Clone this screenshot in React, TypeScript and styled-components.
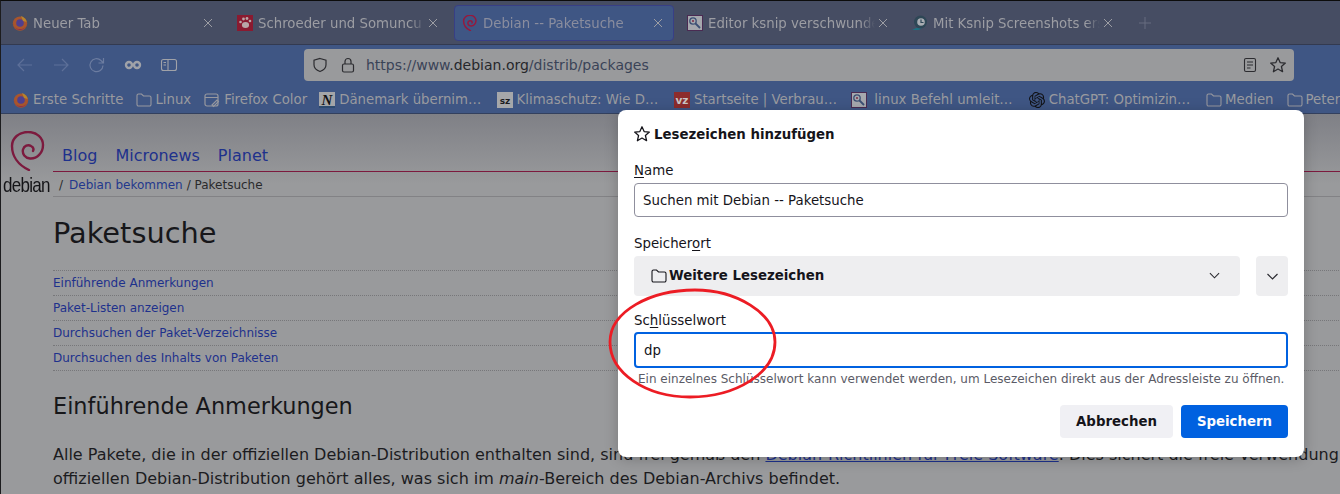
import React from 'react';
import styled, { createGlobalStyle } from 'styled-components';
import { SiOpenai } from 'react-icons/si';

const GlobalStyle = createGlobalStyle`
  html, body {
    margin: 0;
    padding: 0;
    width: 1340px;
    height: 494px;
    overflow: hidden;
    background: #999a9c;
    font-family: "DejaVu Sans", sans-serif;
  }
  * { box-sizing: border-box; }
`;

const Screen = styled.div`
  position: relative;
  width: 1340px;
  height: 494px;
  overflow: hidden;
  border-top: 1px solid #0c0c0c;
  border-left: 1px solid #1c1c1e;
`;

const TabBar = styled.div`
  display: flex;
  align-items: flex-start;
  gap: 5px;
  height: 44px;
  padding: 4px 0 0 3px;
  background: #464d63;
  border-bottom: 1px solid #333a50;
`;

const Tab = styled.div<{ $active?: boolean }>`
  display: flex;
  align-items: center;
  width: 220px;
  height: 36px;
  padding: 0 10px 0 7px;
  border-radius: 4px;
  font-size: 13.3px;
  white-space: nowrap;
  background: ${(p) => (p.$active ? '#3f5684' : 'transparent')};
  border: 1px solid ${(p) => (p.$active ? '#383f86' : 'transparent')};
  color: ${(p) => (p.$active ? '#8a8d9e' : '#9c9da3')};
`;

const TabIcon = styled.span`
  display: flex;
  flex: none;
  width: 16px;
  height: 16px;
  margin-right: 5px;
`;

const TabTitle = styled.span`
  flex: 1;
  margin-right: 3px;
  overflow: hidden;
  -webkit-mask-image: linear-gradient(to left, transparent 0, black 14px);
  mask-image: linear-gradient(to left, transparent 0, black 14px);
`;

const TabPlus = styled.div`
  display: flex;
  align-items: center;
  height: 36px;
  margin-left: 10px;
`;

const NavBar = styled.div`
  display: flex;
  align-items: center;
  height: 36px;
  padding: 4px 46px 0 15px;
  background: #3f5684;
`;

const NavButton = styled.span`
  display: flex;
  width: 18px;
  height: 18px;
  margin-right: 18px;
  flex: none;
`;

const UrlBar = styled.div`
  display: flex;
  align-items: center;
  flex: 1;
  height: 32px;
  margin-left: 108px;
  padding: 0 8px;
  background: #999a9c;
  border-radius: 4px;
  font-size: 14px;
  color: #3a4357;
`;

const UrlDomain = styled.span`
  color: #26272b;
`;

const UrlText = styled.span`
  flex: 1;
  margin-left: 10px;
`;

const UrlStar = styled.span`
  display: flex;
  margin-left: 12px;
`;

const BookmarkBar = styled.div`
  display: flex;
  align-items: center;
  height: 33px;
  padding: 5px 0 0 12px;
  background: #3f5684;
  border-bottom: 1px solid #33405e;
  font-size: 13.3px;
  color: #999a9f;
  white-space: nowrap;
  overflow: hidden;
`;

const Bookmark = styled.div<{ $folder?: boolean; $fixed?: boolean; $tight?: boolean }>`
  display: flex;
  align-items: center;
  flex: none;
  gap: ${(p) => (p.$folder ? 3 : 4)}px;
  margin-right: ${(p) => (p.$tight ? 12 : 13)}px;
  width: ${(p) => (p.$fixed ? '164.4px' : 'auto')};
`;

const LensLabel = styled.span`
  margin-left: 3px;
`;

const Page = styled.div`
  position: relative;
  height: 380px;
  background: linear-gradient(#7f8086 0, #999a9c 70px);
  color: #17171a;
`;

const LogoColumn = styled.div`
  position: absolute;
  left: 2px;
  top: 17px;
  width: 50px;
  font-family: "Liberation Sans", sans-serif;
  color: #141417;
`;

const LogoSwirl = styled.svg`
  display: block;
  margin-left: 6px;
`;

const LogoWord = styled.div`
  margin-top: 6px;
  font-size: 17px;
  line-height: 18px;
  letter-spacing: -0.7px;
  transform: scaleY(1.15);
`;

const SiteHeader = styled.div`
  padding: 31px 0 0 52px;
`;

const TopNav = styled.nav`
  display: flex;
  gap: 18px;
  padding: 0 0 4px 9px;
  font-size: 16px;
  line-height: 22px;
  color: #1e318c;
`;

const Breadcrumb = styled.div`
  height: 26px;
  padding-left: 6px;
  border-top: 1px solid #7c1a3e;
  border-bottom: 1px solid #828285;
  font-size: 12px;
  line-height: 26px;
  color: #2a2a2c;
`;

const CrumbLink = styled.a`
  color: #23388c;
  margin: 0 4px 0 6px;
`;

const Content = styled.main`
  padding: 0 0 0 52px;
  width: 1340px;
`;

const PageTitle = styled.h1`
  margin: 17px 0 18px 0;
  font-size: 28.8px;
  line-height: 38px;
  font-weight: 400;
`;

const TocItem = styled.div`
  height: 25px;
  border-top: 1px dotted #77777a;
  font-size: 12px;
  line-height: 25px;
  color: #1e318c;

  &:last-of-type {
    height: 26px;
    border-bottom: 1px dotted #77777a;
  }
`;

const SectionTitle = styled.h2`
  margin: 20px 0 22px 0;
  font-size: 22.4px;
  line-height: 30px;
  font-weight: 400;
`;

const Paragraph = styled.p`
  margin: 0;
  font-size: 16px;
  line-height: 24px;
  white-space: nowrap;
  color: #1c1c1f;
`;

const DocLink = styled.a`
  color: #1e318c;
  text-decoration: underline;
`;

const Dialog = styled.div`
  position: absolute;
  left: 617px;
  top: 109px;
  width: 686px;
  height: 347px;
  padding: 0 16px;
  background: #fff;
  border-radius: 8px;
  box-shadow: 0 2px 14px rgba(0, 0, 0, 0.22);
  color: #15141a;
  font-size: 13.33px;
`;

const DialogTitle = styled.div`
  display: flex;
  align-items: center;
  gap: 4px;
  height: 48px;
  font-weight: 700;
`;

const FieldLabel = styled.label`
  display: block;
  line-height: 16px;
  margin-bottom: 4px;

  u {
    text-underline-offset: 2px;
  }
`;

const TextField = styled.div<{ $focused?: boolean }>`
  display: flex;
  align-items: center;
  height: ${(p) => (p.$focused ? 36 : 34)}px;
  padding: 0 8px;
  border-radius: 4px;
  background: #fff;
  border: ${(p) => (p.$focused ? '2px solid #0061e0' : '1px solid #8f8f9d')};
`;

const NameGroup = styled.div`
  margin-top: 5px;
`;

const LocationGroup = styled.div`
  margin-top: 19px;
`;

const KeywordGroup = styled.div`
  margin-top: 17px;

  label {
    margin-bottom: 3px;
  }
`;

const LocationRow = styled.div`
  display: flex;
  gap: 16px;
`;

const SelectBox = styled.div`
  display: flex;
  align-items: center;
  flex: 1;
  height: 40px;
  padding: 0 20px 1px 17px;
  background: #eeeef0;
  border-radius: 4px;
  font-weight: 700;
`;

const SelectLabel = styled.span`
  flex: 1;
  margin-left: 2px;
`;

const ExpandButton = styled.div`
  display: flex;
  align-items: center;
  justify-content: center;
  width: 32px;
  height: 40px;
  background: #eeeef0;
  border-radius: 4px;
`;

const HelpText = styled.div`
  margin: 4px 0 0 4px;
  font-size: 12px;
  line-height: 14px;
  color: #5b5b66;
  white-space: nowrap;
`;

const DialogActions = styled.div`
  display: flex;
  justify-content: flex-end;
  gap: 8px;
  margin-top: 19px;
`;

const ActionButton = styled.div<{ $primary?: boolean }>`
  display: flex;
  align-items: center;
  justify-content: center;
  width: ${(p) => (p.$primary ? 107 : 113)}px;
  height: 33px;
  border-radius: 4px;
  font-weight: 700;
  background: ${(p) => (p.$primary ? '#0061e0' : '#f0f0f4')};
  color: ${(p) => (p.$primary ? '#fbfbfe' : '#15141a')};
`;

const RedCircle = styled.svg`
  position: absolute;
  left: 600px;
  top: 280px;
  pointer-events: none;
`;

const FaviconText = styled.text<{ $serif?: boolean }>`
  font-family: ${(p) => (p.$serif ? '"Liberation Serif", serif' : '"DejaVu Sans", sans-serif')};
  font-weight: 700;
  font-style: ${(p) => (p.$serif ? 'italic' : 'normal')};
`;

const CloseIcon = () => (
  <svg width="10" height="10" viewBox="0 0 10 10" style={{ flex: 'none' }}>
    <path d="M1 1l8 8M9 1l-8 8" stroke="#9c9da3" strokeWidth="1" />
  </svg>
);

const FirefoxIcon = () => (
  <svg width="16" height="16" viewBox="0 0 16 16">
    <circle cx="8" cy="8.6" r="7.2" fill="#a8552c" />
    <path d="M1 8a7 7 0 0 0 14 0c0 4-3 6-7 6S1 12 1 8z" fill="#8f2d4c" />
    <circle cx="8" cy="8" r="3.8" fill="#4f3f8e" />
    <path d="M9 1c3 1 5.5 3.5 5.5 6L11 6z" fill="#b5852e" />
  </svg>
);

const swirlPath =
  'M20 39C9 34 3 25 3 15C3 7 10 1 19 1C28 1 34 7 34 14C34 22 28 28 21 27.5C16 27 13 23 14 18.5C15 15 19 13 22 15C24 16 25 18 24 20';

const DebianFavicon = () => (
  <svg width="16" height="16" viewBox="0 0 38 40" fill="none">
    <path d={swirlPath} stroke="#97183c" strokeWidth="3.6" strokeLinecap="round" />
  </svg>
);

const LensFavicon = () => (
  <svg width="16" height="16" viewBox="0 0 16 16">
    <rect x="0.5" y="0.5" width="15" height="15" fill="#a6a8ae" stroke="#4a2b52" />
    <circle cx="6" cy="6" r="3.2" fill="none" stroke="#3c4f74" strokeWidth="1.3" />
    <circle cx="6" cy="6" r="1" fill="#7a2b44" />
    <path d="M8.5 8.5l4.5 4.5" stroke="#3c4f74" strokeWidth="1.8" />
  </svg>
);

const PawFavicon = () => (
  <svg width="16" height="16" viewBox="0 0 16 16">
    <rect width="16" height="16" fill="#8a1a30" />
    <ellipse cx="8.5" cy="10" rx="3.6" ry="3" fill="#b9a6a8" />
    <circle cx="3.5" cy="7" r="1.3" fill="#b9a6a8" />
    <circle cx="6.5" cy="4" r="1.4" fill="#b9a6a8" />
    <circle cx="10" cy="3.5" r="1.4" fill="#b9a6a8" />
    <circle cx="13" cy="6" r="1.3" fill="#b9a6a8" />
  </svg>
);

const GlobeFavicon = () => (
  <svg width="16" height="16" viewBox="0 0 16 16">
    <path d="M0 15l4-2h6l-3 2z" fill="#1f6f80" />
    <circle cx="8.5" cy="7" r="6.5" fill="#2e4756" />
    <circle cx="9" cy="7" r="3.8" fill="#a9adb3" />
    <path d="M9 4.5V7.5H11.5" stroke="#2e4756" strokeWidth="1.2" fill="none" />
  </svg>
);

const FolderIcon = ({ color = '#97989f' }: { color?: string }) => (
  <svg width="16" height="16" viewBox="0 0 16 16" fill="none" style={{ flex: 'none' }}>
    <path
      d="M1 12.5V3.5A1.5 1.5 0 0 1 2.5 2h3l2 2h6A1.5 1.5 0 0 1 15 5.5v7a1.5 1.5 0 0 1-1.5 1.5h-11A1.5 1.5 0 0 1 1 12.5z"
      stroke={color}
      strokeWidth="1.1"
    />
  </svg>
);

const StarIcon = ({ color }: { color: string }) => (
  <svg width="16" height="16" viewBox="0.5 0.5 15 15" fill="none" style={{ flex: 'none' }}>
    <path
      d="M8 1.2l2 4.5 4.9.5-3.7 3.2 1.1 4.9L8 11.8l-4.3 2.5 1.1-4.9L1.1 6.2 6 5.7z"
      stroke={color}
      strokeWidth="1.2"
      strokeLinejoin="round"
    />
  </svg>
);

const Chevron = ({ width = 11 }: { width?: number }) => (
  <svg width={width} height="7" viewBox="0 0 12 7" fill="none">
    <path d="M1 1l5 5 5-5" stroke="#2a2a30" strokeWidth="1.2" />
  </svg>
);

const tabs = [
  { title: 'Neuer Tab', icon: <FirefoxIcon /> },
  { title: 'Schroeder und Somuncu', icon: <PawFavicon /> },
  { title: 'Debian -- Paketsuche', icon: <DebianFavicon />, active: true },
  { title: 'Editor ksnip verschwunden', icon: <LensFavicon /> },
  { title: 'Mit Ksnip Screenshots erstellen', icon: <GlobeFavicon /> },
];

const tocItems = [
  'Einführende Anmerkungen',
  'Paket-Listen anzeigen',
  'Durchsuchen der Paket-Verzeichnisse',
  'Durchsuchen des Inhalts von Paketen',
];

const App: React.FC = () => (
  <>
    <GlobalStyle />
    <Screen>
      <TabBar>
        {tabs.map((tab) => (
          <Tab key={tab.title} $active={tab.active}>
            <TabIcon>{tab.icon}</TabIcon>
            <TabTitle>{tab.title}</TabTitle>
            <CloseIcon />
          </Tab>
        ))}
        <TabPlus>
          <svg width="12" height="12" viewBox="0 0 12 12">
            <path d="M6 0v12M0 6h12" stroke="#666c80" strokeWidth="1" />
          </svg>
        </TabPlus>
      </TabBar>

      <NavBar>
        <NavButton>
          <svg width="18" height="18" viewBox="0 0 18 18" fill="none">
            <path d="M16 9H2M8 3L2 9l6 6" stroke="#5e7099" strokeWidth="1.2" />
          </svg>
        </NavButton>
        <NavButton>
          <svg width="18" height="18" viewBox="0 0 18 18" fill="none">
            <path d="M2 9h14M10 3l6 6-6 6" stroke="#5e7099" strokeWidth="1.2" />
          </svg>
        </NavButton>
        <NavButton>
          <svg width="18" height="18" viewBox="0 0 18 18" fill="none">
            <path d="M15 9.5A6.5 6.5 0 1 1 13 4.5L15 6.5M15.5 2v5h-5" stroke="#6c7ca0" strokeWidth="1.2" />
          </svg>
        </NavButton>
        <NavButton>
          <svg width="18" height="18" viewBox="0 0 18 18" fill="none">
            <circle cx="5" cy="9" r="3" stroke="#a0a2a8" strokeWidth="2.4" />
            <circle cx="13" cy="9" r="3" stroke="#a0a2a8" strokeWidth="2.4" />
          </svg>
        </NavButton>
        <NavButton>
          <svg width="18" height="18" viewBox="0 0 18 18" fill="none">
            <rect x="1.5" y="3.5" width="15" height="11" rx="2" stroke="#a0a2a8" strokeWidth="1.1" />
            <path d="M8 3.5v11M3.5 6.5h2.5M3.5 9h2.5" stroke="#a0a2a8" strokeWidth="1.1" />
          </svg>
        </NavButton>
        <UrlBar>
          <svg width="16" height="16" viewBox="0 0 16 16" fill="none">
            <path d="M8 1.5l6 1.8v4.5c0 3.5-3 5.7-6 6.7-3-1-6-3.2-6-6.7V3.3z" stroke="#2c2c30" strokeWidth="1.2" />
          </svg>
          <svg width="16" height="16" viewBox="0 0 16 16" fill="none" style={{ marginLeft: 12 }}>
            <rect x="2.5" y="7" width="11" height="8" rx="1.5" stroke="#2c2c30" strokeWidth="1.2" />
            <path d="M5 7V4.5a3 3 0 0 1 6 0V7" stroke="#2c2c30" strokeWidth="1.2" />
          </svg>
          <UrlText>
            https://www<UrlDomain>.debian.org</UrlDomain>/distrib/packages
          </UrlText>
          <svg width="16" height="16" viewBox="0 0 16 16" fill="none">
            <rect x="2.5" y="1.5" width="11" height="13" rx="1.5" stroke="#2c2c30" strokeWidth="1.1" />
            <path d="M5 5h6M5 8h6M5 11h3.5" stroke="#2c2c30" strokeWidth="1.1" />
          </svg>
          <UrlStar>
            <StarIcon color="#2c2c30" />
          </UrlStar>
        </UrlBar>
      </NavBar>

      <BookmarkBar>
        <Bookmark>
          <FirefoxIcon />
          Erste Schritte
        </Bookmark>
        <Bookmark $folder>
          <FolderIcon />
          Linux
        </Bookmark>
        <Bookmark $tight>
          <svg width="16" height="16" viewBox="0 0 16 16" fill="none">
            <rect x="1" y="2" width="13" height="12" rx="2" stroke="#97989f" strokeWidth="1.2" />
            <path d="M1 5.5h13M8 13l5-5 1.5 1.5-5 5z" stroke="#97989f" strokeWidth="1.1" />
          </svg>
          Firefox Color
        </Bookmark>
        <Bookmark $fixed>
          <svg width="16" height="16" viewBox="0 0 16 16">
            <rect width="16" height="16" fill="#a4a5a8" />
            <rect y="14" width="16" height="2" fill="#2d4a70" />
            <FaviconText $serif x="8" y="13" fontSize="15" textAnchor="middle" fill="#111114">
              N
            </FaviconText>
          </svg>
          Dänemark übernim…
        </Bookmark>
        <Bookmark $fixed>
          <svg width="16" height="16" viewBox="0 0 16 16">
            <rect width="16" height="16" fill="#a6a7aa" />
            <FaviconText x="8" y="11.5" fontSize="9" textAnchor="middle" fill="#1c1c1f">
              sz
            </FaviconText>
          </svg>
          Klimaschutz: Wie D…
        </Bookmark>
        <Bookmark $fixed>
          <svg width="16" height="16" viewBox="0 0 16 16">
            <rect width="16" height="16" fill="#8c2c2c" />
            <FaviconText x="8" y="12" fontSize="10.5" textAnchor="middle" fill="#c9c6c6">
              vz
            </FaviconText>
          </svg>
          Startseite | Verbrau…
        </Bookmark>
        <Bookmark $fixed>
          <LensFavicon />
          <LensLabel>linux Befehl umleit…</LensLabel>
        </Bookmark>
        <Bookmark $fixed>
          <SiOpenai size={16} color="#111216" />
          ChatGPT: Optimizin…
        </Bookmark>
        <Bookmark $folder>
          <FolderIcon />
          Medien
        </Bookmark>
        <Bookmark $folder>
          <FolderIcon />
          Peter
        </Bookmark>
      </BookmarkBar>

      <Page>
        <LogoColumn>
          <LogoSwirl width="38" height="40" viewBox="0 0 38 40" fill="none">
            <path d={swirlPath} stroke="#7c1a3e" strokeWidth="2.4" strokeLinecap="round" />
          </LogoSwirl>
          <LogoWord>debian</LogoWord>
        </LogoColumn>
        <SiteHeader>
          <TopNav>
            <span>Blog</span>
            <span>Micronews</span>
            <span>Planet</span>
          </TopNav>
          <Breadcrumb>
            /<CrumbLink>Debian bekommen</CrumbLink>/ Paketsuche
          </Breadcrumb>
        </SiteHeader>
        <Content>
          <PageTitle>Paketsuche</PageTitle>
          {tocItems.map((item) => (
            <TocItem key={item}>{item}</TocItem>
          ))}
          <SectionTitle>Einführende Anmerkungen</SectionTitle>
          <Paragraph>
            Alle Pakete, die in der offiziellen Debian-Distribution enthalten sind, sind frei gemäß den{' '}
            <DocLink>Debian-Richtlinien für Freie Software</DocLink>. Dies sichert die freie Verwendung
          </Paragraph>
          <Paragraph>
            offiziellen Debian-Distribution gehört alles, was sich im <em>main</em>-Bereich des Debian-Archivs befindet.
          </Paragraph>
        </Content>
      </Page>

      <Dialog>
        <DialogTitle>
          <StarIcon color="#15141a" />
          Lesezeichen hinzufügen
        </DialogTitle>
        <NameGroup>
          <FieldLabel>
            <u>N</u>ame
          </FieldLabel>
          <TextField>Suchen mit Debian -- Paketsuche</TextField>
        </NameGroup>
        <LocationGroup>
          <FieldLabel>
            Speicher<u>o</u>rt
          </FieldLabel>
          <LocationRow>
            <SelectBox>
              <FolderIcon color="#15141a" />
              <SelectLabel>Weitere Lesezeichen</SelectLabel>
              <Chevron />
            </SelectBox>
            <ExpandButton>
              <Chevron width={13} />
            </ExpandButton>
          </LocationRow>
        </LocationGroup>
        <KeywordGroup>
          <FieldLabel>
            Sc<u>h</u>lüsselwort
          </FieldLabel>
          <TextField $focused>dp</TextField>
          <HelpText>Ein einzelnes Schlüsselwort kann verwendet werden, um Lesezeichen direkt aus der Adressleiste zu öffnen.</HelpText>
        </KeywordGroup>
        <DialogActions>
          <ActionButton>Abbrechen</ActionButton>
          <ActionButton $primary>Speichern</ActionButton>
        </DialogActions>
      </Dialog>

      <RedCircle width="184" height="125" viewBox="0 0 184 125" fill="none">
        <path
          d="M94 9C135 9 174 32 174 61C174 92 135 116 89 116C45 116 9 92 9 61C9 30 50 9 94 9Z"
          stroke="#ec1c24"
          strokeWidth="2.8"
        />
      </RedCircle>
    </Screen>
  </>
);

export default App;
